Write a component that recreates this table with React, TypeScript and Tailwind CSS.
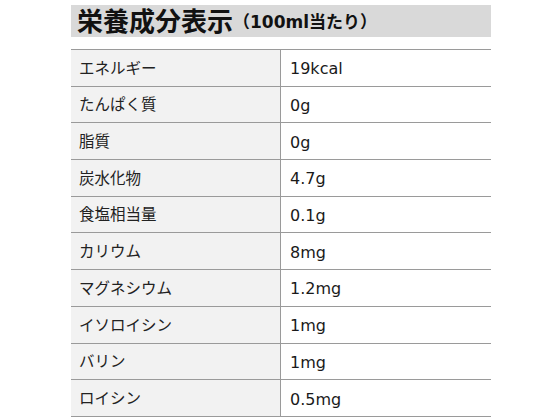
const rows: [string, string][] = [
  ['エネルギー', '19kcal'],
  ['たんぱく質', '0g'],
  ['脂質', '0g'],
  ['炭水化物', '4.7g'],
  ['食塩相当量', '0.1g'],
  ['カリウム', '8mg'],
  ['マグネシウム', '1.2mg'],
  ['イソロイシン', '1mg'],
  ['バリン', '1mg'],
  ['ロイシン', '0.5mg'],
]

export default function App() {
  return (
    <div
      className="w-[560px] h-[420px] bg-white overflow-hidden pt-[5px] pl-[71px]"
      style={{ fontFamily: '"DejaVu Sans", "Noto Sans CJK JP", sans-serif' }}
    >
      {/* 見出し */}
      <div className="w-[420px] h-[32px] bg-[#d9d9d9] flex items-center pl-[6px] pt-[2px] text-[#111]">
        <span className="text-[26px] font-bold leading-none">栄養成分表示</span>
        <span className="text-[17px] font-bold leading-none">（100ml当たり）</span>
      </div>

      {/* 成分表 */}
      <div className="mt-[12px] w-[420px] border-t border-[#9a9a9a]">
        {rows.map(([name, value]) => (
          <div key={name} className="flex h-[36.7px] border-b border-[#9a9a9a]">
            <div className="w-[210px] bg-[#f2f2f2] border-r border-[#9a9a9a] flex items-center pl-[8px] pt-[3px] text-[15.5px] text-[#222]">
              {name}
            </div>
            <div className="flex-1 flex items-center pl-[9px] pt-[3px] text-[16px] text-[#1a1a1a]">{value}</div>
          </div>
        ))}
      </div>
    </div>
  )
}
